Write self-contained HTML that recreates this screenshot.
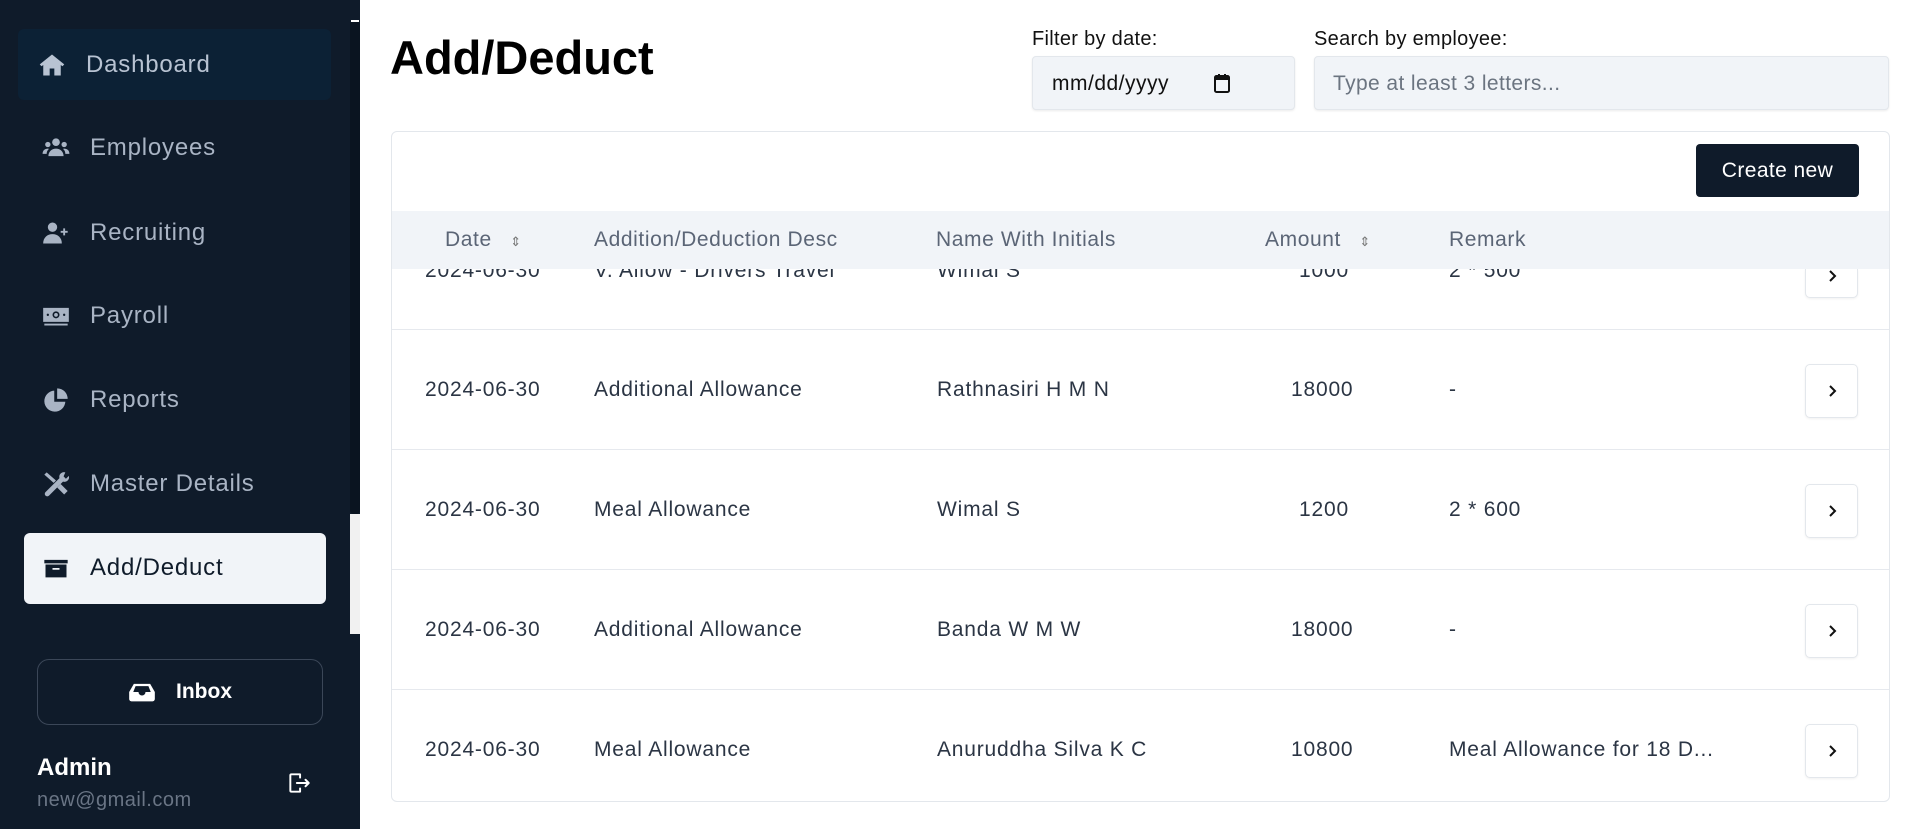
<!DOCTYPE html>
<html><head><meta charset="utf-8"><style>
*{margin:0;padding:0;box-sizing:border-box}
body{width:1920px;height:829px;overflow:hidden;background:#fff;font-family:"Liberation Sans",sans-serif;position:relative}
.a{position:absolute}
.sb{left:0;top:0;width:360px;height:829px;background:#0f1b2a}
.nav{left:55px;font-size:24px;letter-spacing:0.8px;color:#a9b4c4;height:40px;display:flex;align-items:center}
.nav svg{width:28px;height:28px;margin-right:20px;fill:#a9b4c4}
.th{top:211px;height:58px;line-height:58px;font-size:21px;letter-spacing:0.6px;color:#5b6576}
.td{font-size:21px;letter-spacing:0.8px;color:#2b3544;white-space:nowrap}
.chev{left:1805px;width:53px;height:54px;border:1px solid #e3e7ec;border-radius:5px;background:#fff;box-shadow:0 1px 2px rgba(0,0,0,.06)}
.chev svg{position:absolute;left:19px;top:19px}
.line{left:392px;width:1497px;height:1px;background:#e6e9ee}
</style></head><body>
<div class="a sb"></div>
<div class="a" style="left:350px;top:20px;width:10px;height:494px;background:#0a1420;border-radius:4px"></div>
<div class="a" style="left:350px;top:514px;width:10px;height:120px;background:#f1f1f1"></div>
<div class="a" style="left:351px;top:20px;width:8px;height:2px;background:#fff"></div>

<div class="a" style="left:18px;top:29px;width:313px;height:71px;background:#0c2135;border-radius:6px"></div>
<div class="a nav" style="top:45px;left:38px;color:#b8c3d2"><svg viewBox="0 0 24 24" style="fill:#b8c3d2"><path d="M12 3 1.5 11.5l1.5 1.6L4.5 12v9h5.5v-6h4v6h5.5v-9l1.5 1.1 1.5-1.6z"/></svg>Dashboard</div>
<div class="a nav" style="top:128px;left:42px"><svg viewBox="0 0 24 24"><circle cx="12" cy="7" r="3.3"/><circle cx="5" cy="9" r="2.3"/><circle cx="19" cy="9" r="2.3"/><path d="M5.5 19c0-4 3-6.5 6.5-6.5s6.5 2.5 6.5 6.5zM0.5 17c0-3 2-4.5 4.5-4.5l1 .2C4.5 14 4 15.5 4 17zM23.5 17c0-3-2-4.5-4.5-4.5l-1 .2c1.5 1.3 2 2.8 2 4.3z"/></svg>Employees</div>
<div class="a nav" style="top:213px;left:42px"><svg viewBox="0 0 24 24"><circle cx="9" cy="7" r="4"/><path d="M1 21c0-5 3.5-8 8-8s8 3 8 8z"/><path d="M19 8v6M16 11h6" stroke="#a9b4c4" stroke-width="1.6"/></svg>Recruiting</div>
<div class="a nav" style="top:296px;left:42px"><svg viewBox="0 0 24 24"><path d="M1 5h22v12H1z"/><circle cx="12" cy="11" r="3" fill="#0f1b2a"/><circle cx="12" cy="11" r="1.6"/><circle cx="5" cy="11" r="1" fill="#0f1b2a"/><circle cx="19" cy="11" r="1" fill="#0f1b2a"/><path d="M2 18.5h20v1.6H2z"/></svg>Payroll</div>
<div class="a nav" style="top:380px;left:42px"><svg viewBox="0 0 24 24"><path d="M10.5 4A9 9 0 1 0 20 13.5h-9.5z"/><path d="M13 2v9h9a9 9 0 0 0-9-9z"/></svg>Reports</div>
<div class="a nav" style="top:464px;left:42px"><svg viewBox="0 0 24 24"><path d="M2 4l2-2 8 7-2 2z"/><path d="M20 2a4 4 0 0 0-5 5L3 19a2 2 0 0 0 3 3L18 10a4 4 0 0 0 5-5l-2.5 2.5-2-2z"/><path d="M13 15l3-3 6 6-3 3z"/></svg>Master Details</div>
<div class="a" style="left:24px;top:533px;width:302px;height:71px;background:#f1f4f8;border-radius:6px"></div>
<div class="a nav" style="top:548px;left:42px;color:#0f1b2a"><svg viewBox="0 0 24 24" style="fill:#0f1b2a"><path d="M2 5h20v3H2zM3 9h18v11H3z"/><path d="M9 12h6v1.5H9z" fill="#f1f4f8"/></svg>Add/Deduct</div>

<div class="a" style="left:37px;top:659px;width:286px;height:66px;border:1px solid #3b4758;border-radius:12px"></div>
<div class="a" style="left:128px;top:678px;width:28px;height:28px"><svg viewBox="0 0 24 24" width="28" height="28"><path d="M5 5h14l4 7v6a2 2 0 0 1-2 2H3a2 2 0 0 1-2-2v-6z" fill="#fff"/><path d="M4.5 12l2-5h11l2 5h-4.5a3 3 0 0 1-6 0z" fill="#0f1b2a"/></svg></div>
<div class="a" style="left:176px;top:680px;font-size:21px;font-weight:bold;color:#fff">Inbox</div>
<div class="a" style="left:37px;top:754px;font-size:24px;font-weight:bold;color:#fff">Admin</div>
<div class="a" style="left:37px;top:789px;font-size:20px;letter-spacing:0.5px;color:#6a7585">new@gmail.com</div>
<svg class="a" style="left:286px;top:770px" width="26" height="26" viewBox="0 0 24 24" fill="none" stroke="#fff" stroke-width="1.8" stroke-linecap="round" stroke-linejoin="round"><path d="M13 4H5a1 1 0 0 0-1 1v14a1 1 0 0 0 1 1h8M13 4v3M13 20v-3M10 12h11M18 9l3 3-3 3"/></svg>

<div class="a" style="left:390px;top:30px;font-size:47px;font-weight:bold;color:#000">Add/Deduct</div>
<div class="a" style="left:1032px;top:28px;font-size:20px;letter-spacing:0.3px;color:#111">Filter by date:</div>
<div class="a" style="left:1314px;top:28px;font-size:20px;letter-spacing:0.3px;color:#111">Search by employee:</div>
<div class="a" style="left:1032px;top:56px;width:263px;height:54px;background:#f1f4f8;border:1px solid #e3e7ec;border-radius:4px;box-shadow:0 1px 2px rgba(0,0,0,.08)"></div>
<div class="a" style="left:1052px;top:72px;font-size:21px;letter-spacing:0.5px;color:#111">mm/dd/yyyy</div>
<svg class="a" style="left:1213px;top:73px" width="18" height="20" viewBox="0 0 18 20"><rect x="2" y="3" width="14" height="16" rx="1.5" fill="none" stroke="#111" stroke-width="2"/><rect x="2" y="3" width="14" height="4" fill="#111"/><rect x="5" y="1" width="2" height="4" fill="#111"/><rect x="11" y="1" width="2" height="4" fill="#111"/></svg>
<div class="a" style="left:1314px;top:56px;width:575px;height:54px;background:#f1f4f8;border:1px solid #e3e7ec;border-radius:4px;box-shadow:0 1px 2px rgba(0,0,0,.08)"></div>
<div class="a" style="left:1333px;top:72px;font-size:21px;letter-spacing:0.4px;color:#6b7480">Type at least 3 letters...</div>

<div class="a" style="left:391px;top:131px;width:1499px;height:671px;border:1px solid #e3e7ec;border-radius:6px"></div>
<div class="a" style="left:1696px;top:144px;width:163px;height:53px;background:#0f1b2a;border-radius:4px;color:#fff;font-size:21px;letter-spacing:0.4px;text-align:center;line-height:53px">Create new</div>

<div class="a td" style="left:425px;top:259px">2024-06-30</div>
<div class="a td" style="left:594px;top:259px">V. Allow - Drivers Travel</div>
<div class="a td" style="left:937px;top:259px">Wimal S</div>
<div class="a td" style="left:1299px;top:259px">1000</div>
<div class="a td" style="left:1449px;top:259px">2 * 500</div>
<div class="a chev" style="top:269px;height:29px;border-top:none;border-radius:0 0 5px 5px"><svg width="14" height="14" viewBox="0 0 14 14" style="top:0"><path d="M5 2l5 5-5 5" fill="none" stroke="#111" stroke-width="2"/></svg></div>

<div class="a" style="left:392px;top:211px;width:1497px;height:58px;background:#f1f4f8"></div>
<div class="a th" style="left:445px">Date <span style="font-size:13px;margin-left:12px;color:#777">⇕</span></div>
<div class="a th" style="left:594px">Addition/Deduction Desc</div>
<div class="a th" style="left:936px">Name With Initials</div>
<div class="a th" style="left:1265px">Amount <span style="font-size:13px;margin-left:12px;color:#777">⇕</span></div>
<div class="a th" style="left:1449px">Remark</div>

<div class="a line" style="top:329px"></div>
<div class="a line" style="top:449px"></div>
<div class="a line" style="top:569px"></div>
<div class="a line" style="top:689px"></div>

<div class="a td" style="left:425px;top:378px">2024-06-30</div><div class="a td" style="left:594px;top:378px">Additional Allowance</div><div class="a td" style="left:937px;top:378px">Rathnasiri H M N</div><div class="a td" style="left:1291px;top:378px">18000</div><div class="a td" style="left:1449px;top:378px">-</div>
<div class="a chev" style="top:364px"><svg width="14" height="14" viewBox="0 0 14 14"><path d="M5 2l5 5-5 5" fill="none" stroke="#111" stroke-width="2"/></svg></div>
<div class="a td" style="left:425px;top:498px">2024-06-30</div><div class="a td" style="left:594px;top:498px">Meal Allowance</div><div class="a td" style="left:937px;top:498px">Wimal S</div><div class="a td" style="left:1299px;top:498px">1200</div><div class="a td" style="left:1449px;top:498px">2 * 600</div>
<div class="a chev" style="top:484px"><svg width="14" height="14" viewBox="0 0 14 14"><path d="M5 2l5 5-5 5" fill="none" stroke="#111" stroke-width="2"/></svg></div>
<div class="a td" style="left:425px;top:618px">2024-06-30</div><div class="a td" style="left:594px;top:618px">Additional Allowance</div><div class="a td" style="left:937px;top:618px">Banda W M W</div><div class="a td" style="left:1291px;top:618px">18000</div><div class="a td" style="left:1449px;top:618px">-</div>
<div class="a chev" style="top:604px"><svg width="14" height="14" viewBox="0 0 14 14"><path d="M5 2l5 5-5 5" fill="none" stroke="#111" stroke-width="2"/></svg></div>
<div class="a td" style="left:425px;top:738px">2024-06-30</div><div class="a td" style="left:594px;top:738px">Meal Allowance</div><div class="a td" style="left:937px;top:738px">Anuruddha Silva K C</div><div class="a td" style="left:1291px;top:738px">10800</div><div class="a td" style="left:1449px;top:738px">Meal Allowance for 18 D...</div>
<div class="a chev" style="top:724px"><svg width="14" height="14" viewBox="0 0 14 14"><path d="M5 2l5 5-5 5" fill="none" stroke="#111" stroke-width="2"/></svg></div>
</body></html>
